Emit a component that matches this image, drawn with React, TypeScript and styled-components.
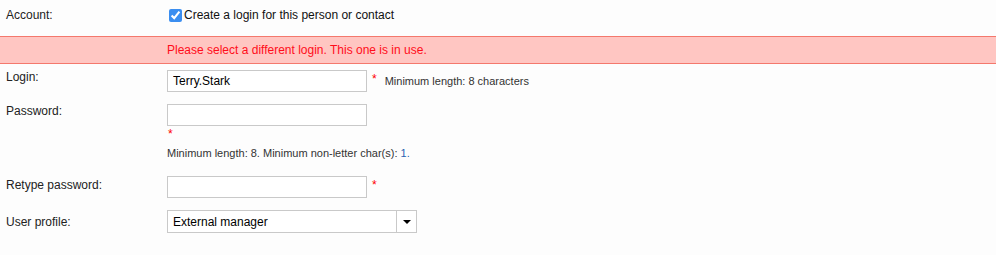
import styled, { createGlobalStyle } from "styled-components";

const GlobalStyle = createGlobalStyle`
  body {
    margin: 0;
    background: #fdfdfd;
    font-family: "Liberation Sans", Arial, Helvetica, sans-serif;
    font-size: 12px;
    color: #333;
  }
`;

const Form = styled.div`
  display: flex;
  flex-direction: column;
  width: 996px;
`;

const Row = styled.div<{ $pad?: string }>`
  display: grid;
  grid-template-columns: 161px 1fr;
  padding: ${({ $pad }) => $pad || "6px 0 6px 6px"};
`;

const Label = styled.div<{ $top?: number }>`
  line-height: 14px;
  padding-top: ${({ $top }) => $top ?? 0}px;
  color: #222;
`;

const Field = styled.div`
  display: flex;
  align-items: flex-start;
`;

const FieldStack = styled.div`
  display: flex;
  flex-direction: column;
`;

const CheckLabel = styled.label`
  display: flex;
  align-items: center;
  gap: 2px;
  line-height: 14px;
  color: #111;
`;

const Check = styled.input`
  width: 13px;
  height: 13px;
  margin: 0 0 0 2px;
  accent-color: #3b8ef0;
`;

const ErrorBanner = styled.div`
  display: grid;
  grid-template-columns: 161px 1fr;
  padding-left: 6px;
  height: 26px;
  align-items: center;
  background: #ffc6c2;
  border-top: 1px solid #f4786d;
  border-bottom: 1px solid #f4786d;
  color: #ff0d1a;
`;

const TextInput = styled.input`
  box-sizing: border-box;
  width: 200px;
  height: 22px;
  margin: 0;
  padding: 0 5px;
  border: 1px solid #c9c9c9;
  background: #fff;
  font-family: inherit;
  font-size: 12px;
  color: #000;
  outline: none;
`;

const Required = styled.span<{ $below?: boolean }>`
  color: #f00;
  font-size: 12px;
  line-height: 14px;
  margin: ${({ $below }) => ($below ? "1px 0 0 1px" : "2px 0 0 5px")};
  height: ${({ $below }) => ($below ? "12px" : "auto")};
`;

const Hint = styled.span<{ $block?: boolean }>`
  font-size: 11px;
  line-height: 22px;
  color: #333;
  margin-left: ${({ $block }) => ($block ? 0 : "8px")};
  margin-top: ${({ $block }) => ($block ? "3px" : 0)};
`;

const Value = styled.span`
  color: #2a62b0;
`;

const Select = styled.div`
  box-sizing: border-box;
  width: 250px;
  height: 23px;
  display: flex;
  align-items: stretch;
  border: 1px solid #c9c9c9;
  background: #fff;
  color: #000;
`;

const SelectText = styled.div`
  flex: 1;
  display: flex;
  align-items: center;
  padding-left: 5px;
`;

const SelectButton = styled.div`
  width: 19px;
  border-left: 1px solid #c9c9c9;
  display: flex;
  align-items: center;
  justify-content: center;
`;

const Arrow = styled.span`
  width: 0;
  height: 0;
  border-left: 4px solid transparent;
  border-right: 4px solid transparent;
  border-top: 4px solid #000;
`;

export default function App() {
  return (
    <>
      <GlobalStyle />
      <Form>
        <Row $pad="8px 0 14px 6px">
          <Label>Account:</Label>
          <Field>
            <CheckLabel>
              <Check type="checkbox" defaultChecked />
              Create a login for this person or contact
            </CheckLabel>
          </Field>
        </Row>
        <ErrorBanner>
          <span />
          <span>Please select a different login. This one is in use.</span>
        </ErrorBanner>
        <Row>
          <Label>Login:</Label>
          <Field>
            <TextInput defaultValue="Terry.Stark" />
            <Required>*</Required>
            <Hint>Minimum length: 8 characters</Hint>
          </Field>
        </Row>
        <Row>
          <Label>Password:</Label>
          <FieldStack>
            <TextInput type="password" />
            <Required $below>*</Required>
            <Hint $block>
              Minimum length: 8. Minimum non-letter char(s): <Value>1.</Value>
            </Hint>
          </FieldStack>
        </Row>
        <Row>
          <Label $top={2}>Retype password:</Label>
          <Field>
            <TextInput type="password" />
            <Required>*</Required>
          </Field>
        </Row>
        <Row>
          <Label $top={5}>User profile:</Label>
          <Field>
            <Select>
              <SelectText>External manager</SelectText>
              <SelectButton>
                <Arrow />
              </SelectButton>
            </Select>
          </Field>
        </Row>
      </Form>
    </>
  );
}
